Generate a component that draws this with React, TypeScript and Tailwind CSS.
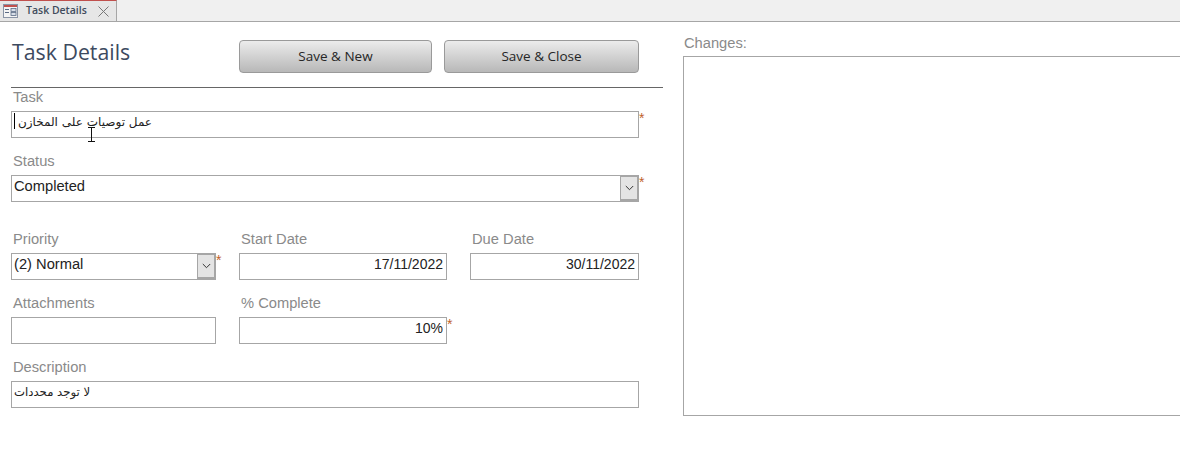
import React from 'react'

const labelClass = "block text-[14.7px] leading-[16px] text-[#8a8a8a] pl-[2px]"
const boxClass = "relative h-[27px] border border-[#a6a6a6] bg-white text-[14.7px] leading-[16px] text-[#222222]"
const numberClass = "pr-[3px] pt-[2px] text-right text-[14px]"
const arabicFont = "font-['DejaVu_Sans',sans-serif]"

function Star() {
  return <span className="absolute left-full top-[-2px] ml-px text-[14px] leading-[16px] text-[#c0622a]">*</span>
}

function Combo({ value }: { value: string }) {
  return (
    <div className={boxClass}>
      <div className="pl-[2px] pt-[2px]">{value}</div>
      <div className="absolute right-0 top-0 bottom-0 w-[18px] border-2 border-[#a6a6a6] border-l border-r border-t bg-[#e4e4e4] flex items-center justify-center">
        <svg width="9" height="6" viewBox="0 0 9 6">
          <path d="M.8 1 4.5 4.7 8.2 1" stroke="#333333" strokeWidth="1" fill="none" />
        </svg>
      </div>
      <Star />
    </div>
  )
}

function Field({ label, children }: { label: string; children: React.ReactNode }) {
  return (
    <div>
      <label className={`${labelClass} h-[15px] mb-[7px]`}>{label}</label>
      {children}
    </div>
  )
}

function ActionButton({ children }: { children: React.ReactNode }) {
  return (
    <button className="h-[33px] rounded-[4px] border border-[#9a9a9a] bg-gradient-to-b from-[#ececec] to-[#b8b8b8] text-[13.5px] text-[#262626] font-['Open_Sans',sans-serif]">
      {children}
    </button>
  )
}

export default function App() {
  return (
    <div className="w-[1180px] h-[453px] overflow-hidden bg-white font-['Liberation_Sans',sans-serif]">
      {/* tab strip */}
      <div className="h-[22px] bg-[#f0f0f0] border-b border-[#a6a6a6] flex">
        <div className="w-[117px] h-[22px] bg-[#e6e6e6] border-t border-t-[#c0504d] border-r border-r-[#a6a6a6] border-b border-b-[#a6a6a6] flex items-center pl-[3px]">
          <svg width="15" height="14" viewBox="0 0 15 14" className="shrink-0">
            <rect x="0.5" y="0.5" width="14" height="13" fill="#f4f4f4" stroke="#8a94a6" />
            <rect x="1" y="1" width="13" height="2" fill="#c0504d" />
            <rect x="2" y="5" width="4" height="1" fill="#5b6b85" />
            <rect x="2" y="8" width="4" height="1" fill="#5b6b85" />
            <rect x="8" y="4.5" width="5" height="3" fill="#d8dee8" stroke="#5b6b85" strokeWidth="0.8" />
            <rect x="8" y="8.5" width="5" height="3" fill="#d8dee8" stroke="#5b6b85" strokeWidth="0.8" />
          </svg>
          <span className="ml-[8px] w-[72px] text-[10.5px] font-semibold text-[#3f4b5c] font-['Open_Sans',sans-serif] whitespace-nowrap">Task Details</span>
          <svg width="11" height="11" viewBox="0 0 11 11" className="shrink-0">
            <path d="M.5.5l10 10M10.5.5l-10 10" stroke="#777777" strokeWidth="1" fill="none" />
          </svg>
        </div>
      </div>

      <div className="flex">
        {/* form column */}
        <div className="w-[652px] ml-[11px] shrink-0">
          <div className="h-[66px] border-b border-[#666666] flex items-start">
            <h1 className="w-[228px] pl-px pt-[15px] text-[21.3px] leading-[30px] text-[#3d4a5f] font-['Open_Sans',sans-serif] whitespace-nowrap">Task Details</h1>
            <div className="grid grid-cols-[193px_195px] gap-x-[12px] pt-[18px]">
              <ActionButton>Save &amp; New</ActionButton>
              <ActionButton>Save &amp; Close</ActionButton>
            </div>
          </div>

          <div className="w-[628px] pt-px">
            <Field label="Task">
              <div className={boxClass}>
                <div className={`pl-[6px] pt-[2px] text-[12px] ${arabicFont} w-fit`} dir="rtl">عمل توصيات على المخازن</div>
                <span className="absolute left-[2px] top-[1px] h-[16px] w-px bg-black" />
                <svg width="9" height="15" viewBox="0 0 9 15" className="absolute left-[75px] top-[15px]">
                  <path d="M1 .5h7M1 14.5h7M4.5 .5v14" stroke="#111111" strokeWidth="1" fill="none" />
                </svg>
                <Star />
              </div>
            </Field>

            <div className="mt-[15px]">
              <Field label="Status">
                <Combo value="Completed" />
              </Field>
            </div>

            <div className="mt-[29px] grid grid-cols-[205px_208px_169px] gap-x-[23px] gap-y-[15px]">
              <Field label="Priority">
                <Combo value="(2) Normal" />
              </Field>
              <Field label="Start Date">
                <div className={`${boxClass} ${numberClass}`}>17/11/2022</div>
              </Field>
              <Field label="Due Date">
                <div className={`${boxClass} ${numberClass}`}>30/11/2022</div>
              </Field>
              <Field label="Attachments">
                <div className={boxClass} />
              </Field>
              <Field label="% Complete">
                <div className={`${boxClass} ${numberClass}`}>
                  10%
                  <Star />
                </div>
              </Field>
            </div>

            <div className="mt-[15px]">
              <Field label="Description">
                <div className={boxClass}>
                  <div className={`pl-[2px] pt-[2px] text-[11.7px] ${arabicFont} w-fit`} dir="rtl">لا توجد محددات</div>
                </div>
              </Field>
            </div>
          </div>
        </div>

        {/* changes column */}
        <div className="ml-[20px] flex-1 pt-[13px]">
          <div className="text-[14.7px] leading-[16px] h-[21px] pl-px text-[#8a8a8a]">Changes:</div>
          <div className="h-[360px] border border-[#a6a6a6] border-r-0 bg-white" />
        </div>
      </div>
    </div>
  )
}
